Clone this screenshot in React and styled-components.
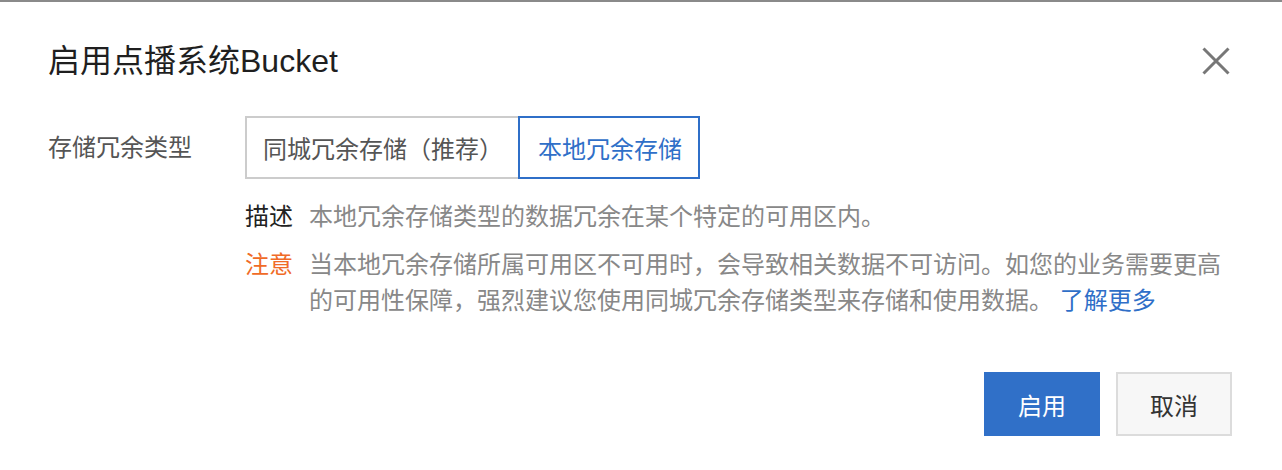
import React, { useState } from "react";
import styled, { createGlobalStyle } from "styled-components";

const GlobalStyle = createGlobalStyle`
  html, body {
    margin: 0;
    padding: 0;
    background: #fff;
  }
  body {
    font-family: "Liberation Sans", "Noto Sans CJK SC", sans-serif;
  }
`;

const Dialog = styled.div`
  border-top: 2px solid #8a8a8a;
  padding: 0 50px 34px 48px;
  height: 470px;
  box-sizing: border-box;
  display: flex;
  flex-direction: column;
`;

const Header = styled.div`
  display: flex;
  justify-content: space-between;
  align-items: center;
  padding-top: 39px;
  margin-bottom: 35px;
`;

const Title = styled.h2`
  margin: 0;
  font-size: 32px;
  line-height: 40px;
  font-weight: 400;
  color: #1f1f1f;
`;

const CloseButton = styled.button`
  border: none;
  background: none;
  padding: 0;
  margin-right: 2px;
  width: 28px;
  height: 28px;
  cursor: pointer;
  display: flex;
`;

const FormRow = styled.div`
  display: flex;
  align-items: center;
`;

const Label = styled.div`
  width: 197px;
  flex-shrink: 0;
  font-size: 24px;
  line-height: 63px;
  color: #555;
`;

const Segmented = styled.div`
  display: flex;
  height: 63px;
`;

const Segment = styled.button`
  font-family: inherit;
  font-size: 24px;
  height: 63px;
  box-sizing: border-box;
  background: #fff;
  cursor: pointer;
  padding: ${(p) => (p.$active ? "0 16px 0 18px" : "0 15px 0 16px")};
  border: 2px solid ${(p) => (p.$active ? "#2f6fc8" : "#cccccc")};
  border-right: ${(p) => (p.$active ? "2px solid #2f6fc8" : "none")};
  color: ${(p) => (p.$active ? "#2f6fc8" : "#555")};
`;

const Notes = styled.div`
  margin: 20px 0 0 197px;
  display: flex;
  flex-direction: column;
  gap: 12px;
`;

const Note = styled.div`
  display: flex;
  font-size: 24px;
  line-height: 36px;
`;

const NoteTag = styled.span`
  flex-shrink: 0;
  width: 64px;
  color: ${(p) => (p.$warn ? "#f06b27" : "#222")};
`;

const NoteText = styled.p`
  margin: 0;
  color: #888;
`;

const MoreLink = styled.a`
  color: #2f6fc8;
  text-decoration: none;
`;

const Footer = styled.div`
  margin-top: auto;
  display: flex;
  justify-content: flex-end;
  gap: 16px;
`;

const ActionButton = styled.button`
  font-family: inherit;
  font-size: 24px;
  width: 116px;
  height: 64px;
  box-sizing: border-box;
  cursor: pointer;
  border: 2px solid ${(p) => (p.$primary ? "#3070c8" : "#dcdcdc")};
  background: ${(p) => (p.$primary ? "#3070c8" : "#f7f7f7")};
  color: ${(p) => (p.$primary ? "#fff" : "#333")};
`;

export default function App() {
  const [type, setType] = useState("local");

  return (
    <>
      <GlobalStyle />
      <Dialog>
        <Header>
          <Title>启用点播系统Bucket</Title>
          <CloseButton aria-label="关闭">
            <svg width="28" height="28" viewBox="0 0 28 28">
              <path d="M1.5 1.5 L26.5 26.5 M26.5 1.5 L1.5 26.5" stroke="#777" strokeWidth="3" />
            </svg>
          </CloseButton>
        </Header>

        <FormRow>
          <Label>存储冗余类型</Label>
          <Segmented>
            <Segment $active={type === "zone"} onClick={() => setType("zone")}>
              同城冗余存储（推荐）
            </Segment>
            <Segment $active={type === "local"} onClick={() => setType("local")}>
              本地冗余存储
            </Segment>
          </Segmented>
        </FormRow>

        <Notes>
          <Note>
            <NoteTag>描述</NoteTag>
            <NoteText>本地冗余存储类型的数据冗余在某个特定的可用区内。</NoteText>
          </Note>
          <Note>
            <NoteTag $warn>注意</NoteTag>
            <NoteText>
              当本地冗余存储所属可用区不可用时，会导致相关数据不可访问。如您的业务需要更高的可用性保障，强烈建议您使用同城冗余存储类型来存储和使用数据。{" "}
              <MoreLink href="#">了解更多</MoreLink>
            </NoteText>
          </Note>
        </Notes>

        <Footer>
          <ActionButton $primary>启用</ActionButton>
          <ActionButton>取消</ActionButton>
        </Footer>
      </Dialog>
    </>
  );
}
